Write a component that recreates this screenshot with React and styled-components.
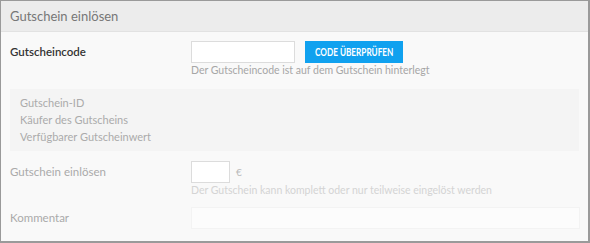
import React from 'react'
import styled, { createGlobalStyle } from 'styled-components'

const Global = createGlobalStyle`
  html, body { margin: 0; padding: 0; }
  body {
    font-family: 'Lato', 'Liberation Sans', sans-serif;
    background: #fff;
  }
`

const Panel = styled.div`
  width: 590px;
  height: 243px;
  box-sizing: border-box;
  border: 1px solid #9a9a9a;
  border-right-width: 2px;
  border-bottom-width: 2px;
  background: #f9f9f9;
  overflow: hidden;
`

const Header = styled.div`
  height: 30px;
  background: #ececec;
  border-bottom: 1px solid #e2e2e2;
  display: flex;
  align-items: center;
  padding-left: 9px;
  font-size: 13px;
  color: #777;
`

const Body = styled.div`
  padding: 9px 9px 0 9px;
`

const Row = styled.div`
  display: grid;
  grid-template-columns: 181px 1fr;
  margin-bottom: ${p => p.gap || 0}px;
`

const Label = styled.div`
  font-size: 11.5px;
  line-height: 22px;
  color: ${p => (p.strong ? '#333' : '#aaa')};
  font-weight: ${p => (p.strong ? 600 : 400)};
`

const Controls = styled.div`
  display: flex;
  align-items: center;
  gap: 10px;
`

const Input = styled.div`
  width: ${p => p.w}px;
  height: 20px;
  background: #fff;
  border: 1px solid ${p => (p.faded ? '#f0f0f0' : '#dcdcdc')};
  opacity: ${p => (p.faded ? 0.6 : 1)};
`

const Button = styled.div`
  width: 98px;
  height: 22px;
  background: #10a1ef;
  color: #fff;
  display: flex;
  align-items: center;
  justify-content: center;
`

/* the original face is a condensed sans; squeeze Lato to the same width */
const ButtonText = styled.span`
  display: inline-block;
  font-size: 10.5px;
  font-weight: 700;
  white-space: nowrap;
  transform: scaleX(0.78);
`

const Help = styled.div`
  font-size: 10.5px;
  color: ${p => (p.faded ? '#d4d4d4' : '#a6a6a6')};
  margin-top: 1px;
`

const Unit = styled.span`
  font-size: 10px;
  color: #bbb;
  margin-left: -4px;
`

const InfoBox = styled.div`
  background: #f4f4f4;
  padding: 5px 10px 6px;
  margin: 0 0 10px 0;
`

const InfoLine = styled.div`
  font-size: 11px;
  line-height: 17px;
  color: #ababab;
`

export default function App() {
  return (
    <>
      <Global />
      <Panel>
        <Header>Gutschein einlösen</Header>
        <Body>
          <Row gap={13}>
            <Label strong>Gutscheincode</Label>
            <div>
              <Controls>
                <Input w={102} />
                <Button><ButtonText>CODE ÜBERPRÜFEN</ButtonText></Button>
              </Controls>
              <Help>Der Gutscheincode ist auf dem Gutschein hinterlegt</Help>
            </div>
          </Row>
          <InfoBox>
            <InfoLine>Gutschein-ID</InfoLine>
            <InfoLine>Käufer des Gutscheins</InfoLine>
            <InfoLine>Verfügbarer Gutscheinwert</InfoLine>
          </InfoBox>
          <Row gap={11}>
            <Label>Gutschein einlösen</Label>
            <div>
              <Controls>
                <Input w={37} />
                <Unit>€</Unit>
              </Controls>
              <Help faded>Der Gutschein kann komplett oder nur teilweise eingelöst werden</Help>
            </div>
          </Row>
          <Row>
            <Label>Kommentar</Label>
            <Controls>
              <Input w={387} faded />
            </Controls>
          </Row>
        </Body>
      </Panel>
    </>
  )
}
